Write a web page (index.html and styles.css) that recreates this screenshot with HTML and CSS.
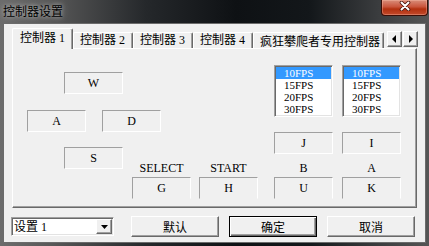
FILE: index.html
```html
<!DOCTYPE html>
<html lang="zh-CN">
<head>
  <meta charset="UTF-8" />
  <title>控制器设置</title>
  <link rel="stylesheet" href="styles.css">
</head>
<body>

  <div class="frame">
    <header class="titlebar">
      <span class="title">控制器设置</span>
      <button class="close" title="关闭">
        <svg width="12" height="10" viewBox="0 0 12 10">
          <path d="M2.5 1.5 L9.5 8.5 M9.5 1.5 L2.5 8.5" stroke="#4a140a" stroke-width="3.6" stroke-linecap="round" fill="none"/>
          <path d="M2.5 1.5 L9.5 8.5 M9.5 1.5 L2.5 8.5" stroke="#fff" stroke-width="2" stroke-linecap="round" fill="none"/>
        </svg>
      </button>
    </header>

    <div class="window">
      <!-- Tab strip -->
      <nav class="tabs">
        <div class="tab tab--active">控制器&nbsp;1</div>
        <div class="tab">控制器&nbsp;2</div>
        <div class="tab">控制器&nbsp;3</div>
        <div class="tab">控制器&nbsp;4</div>
        <div class="tab tab--wide">疯狂攀爬者专用控制器</div>
        <div class="tab-scroll">
          <span class="scroll-btn">
            <svg width="5" height="8" viewBox="0 0 5 8"><polygon points="4,0 4,8 0,4" fill="#000"/></svg>
          </span>
          <span class="scroll-btn">
            <svg width="5" height="8" viewBox="0 0 5 8"><polygon points="1,0 1,8 5,4" fill="#000"/></svg>
          </span>
        </div>
      </nav>

      <!-- Key mapping panel -->
      <section class="panel">
        <div class="key key-w">W</div>
        <div class="key key-a">A</div>
        <div class="key key-d">D</div>
        <div class="key key-s">S</div>

        <ul class="list list-1">
          <li class="selected">10FPS</li>
          <li>15FPS</li>
          <li>20FPS</li>
          <li>30FPS</li>
        </ul>
        <ul class="list list-2">
          <li class="selected">10FPS</li>
          <li>15FPS</li>
          <li>20FPS</li>
          <li>30FPS</li>
        </ul>

        <div class="key key-j">J</div>
        <div class="key key-i">I</div>

        <div class="label col-select">SELECT</div>
        <div class="label col-start">START</div>
        <div class="label col-b">B</div>
        <div class="label col-abtn">A</div>

        <div class="key key--open col-select">G</div>
        <div class="key key--open col-start">H</div>
        <div class="key key--open col-b">U</div>
        <div class="key key--open col-abtn">K</div>
      </section>

      <!-- Bottom bar -->
      <footer class="footer">
        <div class="combo">
          <span class="combo-text">设置&nbsp;1</span>
          <span class="combo-btn">
            <svg width="7" height="4" viewBox="0 0 7 4"><polygon points="0,0 7,0 3.5,4" fill="#000"/></svg>
          </span>
        </div>
        <button class="btn">默认</button>
        <button class="btn btn--default">确定</button>
        <button class="btn">取消</button>
      </footer>
    </div>
  </div>

</body>
</html>
```

FILE: styles.css
```css
/* Reset & base */
* {
  box-sizing: border-box;
}
html, body {
  margin: 0; padding: 0;
}
body {
  width: 429px;
  height: 246px;
  overflow: hidden;
  font-family: "Liberation Serif", "Noto Sans CJK SC", serif;
  font-size: 12px;
  color: #000;
  background: linear-gradient(90deg, #6c6c6c 0%, #585858 12%, #25282b 34%, #0e1114 55%, #13171a 72%, #3a3c3e 88%, #555 100%);
}

/* Window frame */
.frame {
  display: flex;
  flex-direction: column;
  height: 246px;
  padding: 0 3px 3px 3px;
}

.titlebar {
  height: 23px;
  display: flex;
  justify-content: space-between;
  align-items: flex-start;
  margin-right: -2px;
}

.title {
  font-family: "Noto Sans CJK SC", sans-serif;
  font-size: 12px;
  line-height: 12px;
  margin-top: 5px;
  color: #000;
  text-shadow: 0 0 4px rgba(255,255,255,0.55), 0 0 9px rgba(255,255,255,0.35);
}

.close {
  width: 47px;
  height: 16px;
  padding: 1px 0 0 0;
  border: 1px solid #3a0d06;
  border-top: none;
  border-radius: 0 0 4px 4px;
  background: linear-gradient(#d98d7a, #c9553c 45%, #b2300f 60%, #c34a2c);
  box-shadow: inset 0 0 0 1px rgba(255,200,180,0.35);
  display: flex;
  justify-content: center;
  align-items: flex-start;
}

.window {
  flex: 1;
  background: #f0f0f0;
  border: 1px solid #6b6b6b;
  padding: 5px 8px 0 8px;
  display: flex;
  flex-direction: column;
}

/* Tabs */
.tabs {
  display: flex;
  align-items: flex-end;
  height: 19px;
}

.tab {
  flex-shrink: 0;
  width: 60px;
  height: 16px;
  padding-left: 6px;
  line-height: 15px;
  white-space: nowrap;
  overflow: hidden;
  border-top: 1px solid #fff;
  border-left: 1px solid #fff;
  border-right: 1px solid #696969;
  border-radius: 2px 2px 0 0;
  box-shadow: inset -1px 0 #a0a0a0;
}

.tab--active {
  position: relative;
  z-index: 1;
  width: 61px;
  height: 21px;
  margin-bottom: -1px;
  padding-left: 7px;
  line-height: 19px;
  background: #f0f0f0;
}

.tab--wide {
  width: 131px;
  font-family: "Noto Sans CJK SC", sans-serif;
}

.tab-scroll {
  flex-shrink: 0;
  display: flex;
  gap: 1px;
  margin-left: 3px;
  align-self: center;
}

.scroll-btn {
  width: 15px;
  height: 16px;
  background: #f0f0f0;
  border: 1px solid;
  border-color: #fff #696969 #696969 #fff;
  box-shadow: inset -1px -1px #a0a0a0;
  display: flex;
  justify-content: center;
  align-items: center;
}

/* Panel */
.panel {
  width: 405px;
  height: 160px;
  border: 1px solid;
  border-color: #fff #696969 #696969 #fff;
  box-shadow: inset -1px -1px #a0a0a0;
  padding: 16px 0 0 14px;
  display: grid;
  grid-template-columns: 37px 38px 30px 67px 75px 68px 59px;
  grid-template-rows: 7px 38px 22px 15px 7px 23px 22px;
}

.key {
  width: 59px;
  height: 22px;
  align-self: start;
  border: 1px solid;
  border-color: #a0a0a0 #fff #fff #a0a0a0;
  display: flex;
  justify-content: center;
  align-items: center;
}
.key--open {
  grid-row: 7;
  border-bottom-color: transparent;
}

.key-w { grid-column: 2 / 4; grid-row: 2; }
.key-a { grid-column: 1 / 3; grid-row: 3; }
.key-d { grid-column: 3 / 5; grid-row: 3; }
.key-s { grid-column: 2 / 4; grid-row: 5 / 8; }
.key-j { grid-column: 6; grid-row: 4 / 6; }
.key-i { grid-column: 7; grid-row: 4 / 6; }

.col-select { grid-column: 4; }
.col-start { grid-column: 5; }
.col-b { grid-column: 6; }
.col-abtn { grid-column: 7; }

.label {
  grid-row: 6;
  width: 59px;
  align-self: end;
  margin-bottom: 3px;
  line-height: 12px;
  text-align: center;
}

/* FPS lists */
.list {
  width: 59px;
  height: 52px;
  margin: 0;
  padding: 1px;
  list-style: none;
  align-self: start;
  grid-row: 1 / 4;
  background: #fff;
  border: 1px solid;
  border-color: #a0a0a0 #fff #fff #a0a0a0;
  box-shadow: inset 1px 1px #696969, inset -1px -1px #e3e3e3;
}
.list-1 { grid-column: 6; }
.list-2 { grid-column: 7; }

.list li {
  height: 12px;
  font-size: 11px;
  line-height: 12px;
  padding-left: 8px;
}
.list li.selected {
  background: #3399ff;
  color: #fff;
}

/* Footer */
.footer {
  display: flex;
  align-items: center;
  gap: 10px;
  height: 21px;
  margin-top: 8px;
  margin-left: -1px;
}

.combo {
  width: 103px;
  height: 19px;
  margin-right: 7px;
  padding: 1px;
  background: #fff;
  border: 1px solid;
  border-color: #a0a0a0 #fff #fff #a0a0a0;
  box-shadow: inset 1px 1px #696969, inset -1px -1px #e3e3e3;
  display: flex;
  justify-content: space-between;
  align-items: center;
}

.combo-text {
  padding-left: 1px;
  line-height: 14px;
}

.combo-btn {
  width: 16px;
  height: 15px;
  background: #f0f0f0;
  border: 1px solid;
  border-color: #fff #696969 #696969 #fff;
  box-shadow: inset -1px -1px #a0a0a0;
  display: flex;
  justify-content: center;
  align-items: center;
}

.btn {
  width: 88px;
  height: 21px;
  padding: 0;
  font-family: "Noto Sans CJK SC", sans-serif;
  font-size: 12px;
  line-height: 17px;
  color: #000;
  background: #f0f0f0;
  border: 1px solid;
  border-color: #fff #696969 #696969 #fff;
  box-shadow: inset -1px -1px #a0a0a0;
}

.btn--default {
  border: 1px solid #000;
  box-shadow: inset 1px 1px #fff, inset -1px -1px #696969, inset -2px -2px #a0a0a0;
}
```
